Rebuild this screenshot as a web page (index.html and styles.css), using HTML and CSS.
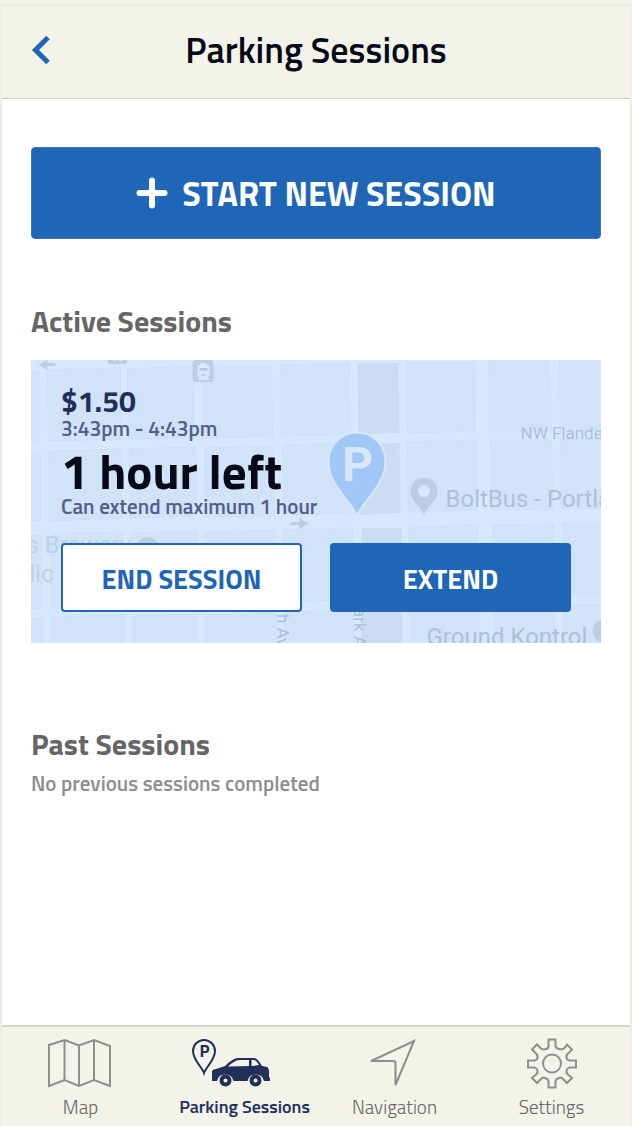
FILE: index.html
```
<!DOCTYPE html>
<html lang="en">
<head>
<meta charset="utf-8">
<meta name="viewport" content="width=device-width, initial-scale=1">
<title>Parking Sessions</title>
<link rel="stylesheet" href="styles.css">
</head>
<body>
<div class="app">
  <header class="header">
    <button class="back" type="button" aria-label="Back">
      <svg width="20" height="30" viewBox="0 0 20 30" aria-hidden="true"><path d="M18 2.500L5.500 15L18 27.500" fill="none" stroke="currentColor" stroke-width="5"/></svg>
    </button>
    <h1 class="title">Parking Sessions</h1>
  </header>

  <main class="content">
    <button class="start" type="button">
      <svg width="32" height="32" viewBox="0 0 32 32" aria-hidden="true"><path d="M16 3.500V28.500M3.500 16H28.500" stroke="currentColor" stroke-width="6" stroke-linecap="round"/></svg>
      <span>START NEW SESSION</span>
    </button>

    <section class="active">
      <h2 class="heading">Active Sessions</h2>
      <article class="card">
        <svg class="map" viewBox="0 0 571 283" preserveAspectRatio="xMidYMid slice" aria-hidden="true">
          <g class="blocks">
            <path d="M-2 12L9 11V81L-2 82ZM17 10L90 8V79L18 81ZM97 9L163 6L164 78L98 79ZM172 7L241 6L242 77L173 78ZM250 5L319 3L320 74L251 76ZM376 2H444L445 71L377 73ZM458 1H519L521 71H459ZM529 -2H573V71H530Z"/>
            <path d="M-2 93L10 92V160L-2 161ZM18 91L91 89V158L19 161ZM99 89L165 87L166 156L100 158ZM174 88L242 86L244 156L175 157ZM252 85L321 83V153L253 155ZM377 82L446 80V150L378 152ZM460 80H521L522 149L461 150ZM530 79H573V149H531Z"/>
            <path d="M-2 176L11 175V248L-2 249ZM20 174L92 172L93 246L20 248ZM100 173L166 171V245L101 247ZM175 172L244 170L245 242L175 245ZM253 170L322 168V240L254 242ZM378 167L447 165L448 237L379 239ZM462 165L523 164L524 236H463ZM532 163H573V236H532Z"/>
            <path d="M-2 259L12 258V286H-2ZM20 257L94 255V286H20ZM102 256L167 254V286H102ZM175 255L245 252V286H175ZM254 252L323 250V286H254ZM380 249L448 247V286H380ZM464 247L524 246V286H464ZM533 245H573V286H533Z"/>
          </g>
          <path class="park" d="M327 3H368L369 73L328 74ZM329 84L369 83L370 153L330 155ZM331 168H371L372 240L331 242ZM331 250L372 249V286H331Z"/>
          <g class="marks">
            <path d="M8 5L17 -1V3H25V6H17V10Z"/>
            <path d="M260 162H269V158L278 163.500L269 169V165H260Z"/>
            <rect x="77" y="-8" width="20" height="12" rx="3"/>
            <rect x="162" y="0" width="21" height="22" rx="3"/>
            <circle cx="117" cy="188" r="11"/>
            <circle cx="573" cy="271" r="11"/>
            <path d="M393.500 156C392 147 380 142 380 131A13.500 13.500 0 0 1 407 131C407 142 395 147 393.500 156Z"/>
          </g>
          <g class="street">
            <circle cx="393.500" cy="131" r="6"/>
            <path d="M83 -2H86V1H83ZM89 -2H92V1H89Z"/>
            <path d="M170 3H176V5H178Q179 5 179 7V16Q179 17 177 17L179 20H167L169 17Q167 17 167 16V7Q167 5 168 5H170Z"/>
          </g>
          <path class="marks" d="M169 8H177V11H169ZM171 14H175V16H171Z"/>
          <path class="pin" d="M326.500 156C320 140 298 125 298 101A28.500 28.500 0 0 1 355 101C355 125 333 140 326.500 156Z"/>
          <text class="pin-letter" x="327" y="121" text-anchor="middle">P</text>
          <g class="labels">
            <text class="label-small" x="490" y="79">NW Flanders</text>
            <text x="415" y="147">BoltBus - Portland</text>
            <text x="396" y="285">Ground Kontrol</text>
            <text class="faint" x="-4" y="193">s Brewery</text>
            <text class="faint" x="-1" y="222">lic House</text>
            <text class="label-small" transform="translate(246 254) rotate(90)">h Ave</text>
            <text class="label-small" transform="translate(323 248) rotate(90)">ark Ave</text>
          </g>
        </svg>
        <div class="details">
          <p class="price">$1.50</p>
          <p class="note">3:43pm - 4:43pm</p>
          <p class="left">1 hour left</p>
          <p class="note">Can extend maximum 1 hour</p>
          <div class="actions">
            <button class="btn btn-outline" type="button">END SESSION</button>
            <button class="btn btn-solid" type="button">EXTEND</button>
          </div>
        </div>
      </article>
    </section>

    <section class="past">
      <h2 class="heading">Past Sessions</h2>
      <p class="empty">No previous sessions completed</p>
    </section>
  </main>

  <nav class="tabs" aria-label="Main">
    <a class="tab" href="#map">
      <svg class="icon" width="68" height="52" viewBox="0 0 68 52" aria-hidden="true"><path d="M2 8L17.500 3L32 8.500L47 3L63 9V49L47 43L32 49L17.500 43L2 49ZM17.500 3V43M32 8.500V49M47 3V43"/></svg>
      <span>Map</span>
    </a>
    <a class="tab tab-current" href="#sessions" aria-current="page">
      <svg class="icon" width="108" height="52" viewBox="0 0 108 52" aria-hidden="true">
        <path d="M13 36C11 30 2 23 2 14A11 11 0 0 1 24 14C24 23 15 30 13 36Z"/>
        <text class="tiny-letter" x="13.500" y="20" text-anchor="middle">P</text>
        <path class="solid" d="M21 34Q22 32 25 32L34 29Q42 21 47 21H63Q66 21 69 26L71 29L76 30Q78 31 78 35V40L79 41V44H73A8.500 8.500 0 0 0 56.500 44H42.500A8.500 8.500 0 0 0 26 44H21Z"/>
        <path class="glass" d="M37 29.500Q44 23 48 23H58V29ZM60.500 23H63Q65 23 68 28L60.500 29Z"/>
        <circle class="wheel" cx="34.500" cy="43.500" r="4"/><circle class="wheel" cx="64.500" cy="43.500" r="4"/>
      </svg>
      <span>Parking Sessions</span>
    </a>
    <a class="tab" href="#navigation">
      <svg class="icon" width="54" height="52" viewBox="0 0 54 52" aria-hidden="true"><path d="M3 24L46 4L27.500 48V26Q27.500 24 25 24Z"/></svg>
      <span>Navigation</span>
    </a>
    <a class="tab" href="#settings">
      <svg class="icon" width="52" height="52" viewBox="0 0 52 52" aria-hidden="true">
        <path d="M22.500 2.500H29.500V9Q30 11.500 33 12Q36 13 38.500 11L41 7.500L46 12.500L41.500 17Q39.500 19 41 22Q42 24 45 23.500H50V30.500H45Q42 30 41 32.500Q39.500 35 41.500 37L46 41L41 46L37 42Q35 39.500 32 41.500Q29.500 42 29.500 45V50.500H22.500V45Q22.500 42 20 41.500Q17 39.500 15 42L11 46L6 41L10.500 37Q12.500 35 11 32.500Q10 30 7 30.500H2V23.500H7Q10 24 11 22Q12.500 19 10.500 17L6 12.500L11 7.500L15 11.500Q17 13 20 12Q22.500 11.500 22.500 9Z"/>
        <circle cx="26" cy="26.500" r="9"/>
      </svg>
      <span>Settings</span>
    </a>
  </nav>
</div>
</body>
</html>
```

FILE: styles.css
```
* { box-sizing: border-box; }
body {
  margin: 0;
  padding-top: 4px;
  background: #f4f3ea;
  font-family: "Titillium Web", Roboto, "Liberation Sans", sans-serif;
}
h1, h2, p { margin: 0; }
button { font: inherit; cursor: pointer; }
.app {
  display: flex;
  flex-direction: column;
  min-height: calc(100vh - 4px);
  border: 2px solid #ebede6;
  border-bottom: 0;
  background: #fff;
}
.header {
  display: grid;
  grid-template-columns: 80px 1fr 80px;
  align-items: center;
  height: 93px;
  padding-bottom: 5px;
  border-bottom: 1px solid #cfcfbf;
  background: #f4f3ea;
}
.back {
  display: flex;
  justify-self: start;
  margin-left: 20px;
  padding: 8px;
  border: 0;
  background: none;
  color: #1f66b7;
}
.title {
  text-align: center;
  font-size: 36px;
  font-weight: 600;
  line-height: 48px;
  color: #060a18;
}
.content { flex: 1; padding: 48px 29px; }
.start {
  display: flex;
  align-items: center;
  justify-content: center;
  gap: 14px;
  width: 100%;
  height: 92px;
  padding: 0;
  border: 1px solid #3877c0;
  border-radius: 4px;
  background: #1f66b7;
  color: #fff;
  font-size: 34px;
  font-weight: 700;
}
.active { margin-top: 62px; }
.heading {
  font-size: 30px;
  font-weight: 700;
  line-height: 40px;
  color: #666;
}
.card {
  position: relative;
  margin-top: 19px;
  overflow: hidden;
  background: #d6e8fe;
}
.map {
  position: absolute;
  inset: 0;
  width: 100%;
  height: 100%;
}
.blocks { fill: #d1e3f9; stroke: #cde0f6; }
.park { fill: #c9dcf3; }
.marks { fill: #bacde1; }
.street { fill: #d6e8fe; }
.pin { fill: #a1c7f6; stroke: #d6e8fe; stroke-width: 2; }
.pin-letter { fill: #d6e8fe; font-family: Roboto, sans-serif; font-size: 48px; font-weight: 700; }
.labels { fill: #acc1d6; font-family: Roboto, sans-serif; font-size: 24px; font-weight: 400; }
.label-small { font-size: 17px; }
.faint { fill: #bed1e5; }
.details { position: relative; padding: 25px 30px 31px; }
.price {
  font-size: 30px;
  font-weight: 700;
  line-height: 32px;
  color: #222f58;
}
.note {
  font-size: 21px;
  font-weight: 600;
  line-height: 22px;
  color: #525f8c;
}
.left {
  padding-top: 8px;
  font-size: 49px;
  font-weight: 700;
  line-height: 48px;
  color: #060a18;
}
.actions {
  display: grid;
  grid-template-columns: 1fr 1fr;
  gap: 28px;
  margin-top: 26px;
}
.btn {
  height: 69px;
  padding: 2px 0 0;
  border: 2px solid #1f66b7;
  border-radius: 4px;
  font-size: 27px;
  font-weight: 700;
}
.btn-outline { background: #fff; color: #1f66b7; }
.btn-solid { background: #1f66b7; color: #fff; }
.past { margin-top: 81px; }
.empty {
  margin-top: 6px;
  font-size: 21px;
  font-weight: 600;
  line-height: 26px;
  color: #8e8e8e;
}
.tabs {
  display: grid;
  grid-template-columns: repeat(4, 1fr);
  height: 101px;
  padding-top: 10px;
  border-top: 2px solid #d6d6cc;
  background: #f4f3ea;
}
.tab {
  display: flex;
  flex-direction: column;
  align-items: center;
  gap: 4px;
  font-size: 19px;
  font-weight: 300;
  line-height: 28px;
  white-space: nowrap;
  text-decoration: none;
  color: #666;
}
.tab-current { padding-left: 14px; font-size: 18px; font-weight: 600; color: #222f58; }
.icon { fill: none; stroke: #8e8e8e; stroke-width: 2; }
.tab-current .icon { stroke: #222f58; }
.solid { fill: #222f58; stroke: none; }
.glass { fill: #f4f3ea; stroke: none; }
.wheel { stroke-width: 4; }
.tiny-letter { fill: #222f58; stroke: none; font-size: 17px; font-weight: 700; }
```
